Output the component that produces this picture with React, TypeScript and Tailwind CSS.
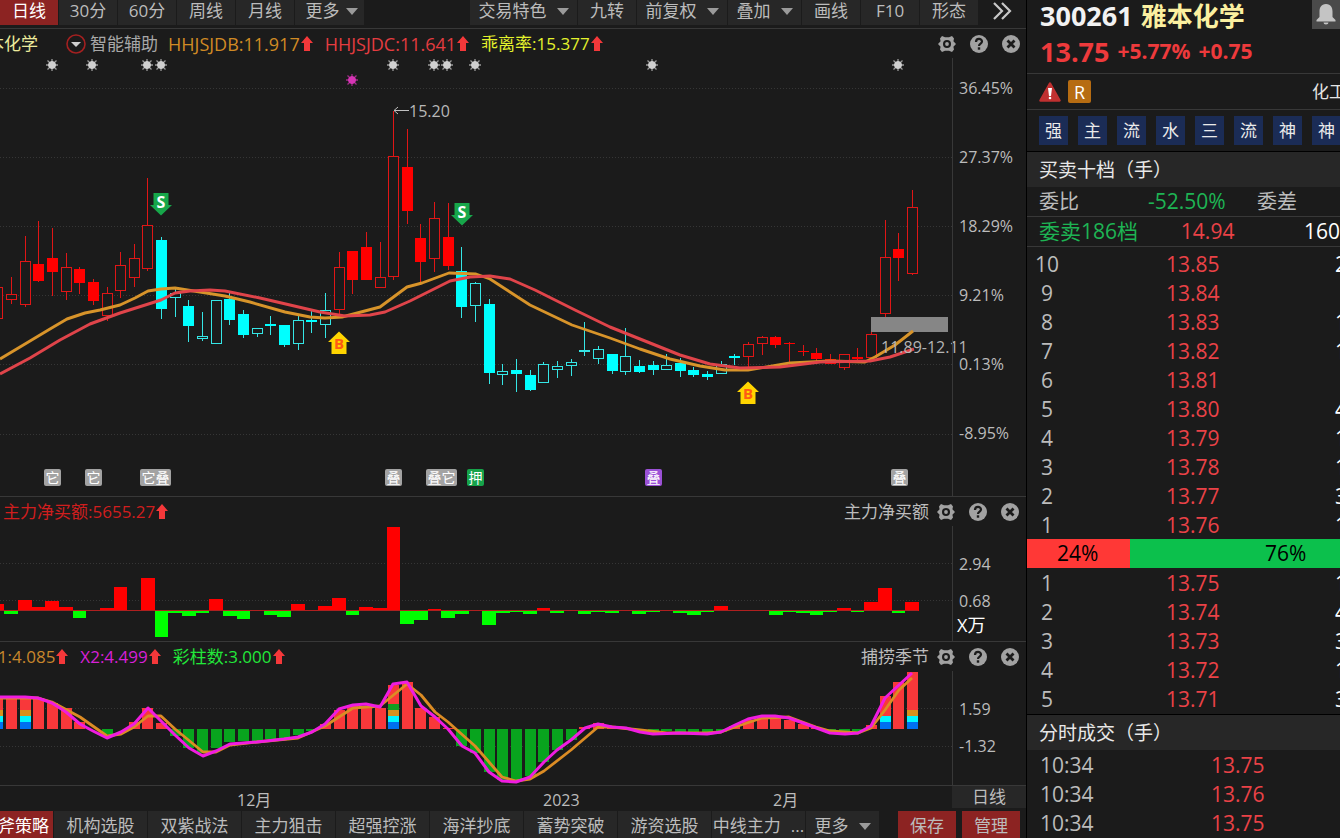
import type { ReactNode } from 'react';
import clsx from 'clsx';

type Kind = 'r' | 'R' | 'c' | 'C';
// kind, high, body top, body bottom, low. Upper case = filled body
type Candle = [Kind, number, number, number, number];

const STEP = 13.65;
const xOf = (i: number) => i * STEP - 2.2;

const candles: Candle[] = [
  ['r', 287, 287, 319, 319], ['r', 277, 294, 300, 304], ['r', 236, 261, 305, 307], ['R', 221, 264, 281, 282],
  ['R', 228, 258, 272, 296], ['r', 253, 267, 292, 300], ['R', 267, 269, 283, 294], ['R', 279, 282, 301, 305],
  ['r', 287, 293, 316, 321], ['r', 252, 265, 291, 298], ['r', 244, 258, 278, 287], ['r', 178, 225, 269, 271],
  ['C', 237, 240, 309, 319], ['c', 289, 293, 298, 317], ['C', 300, 306, 326, 342], ['c', 312, 336, 339, 341],
  ['c', 300, 300, 344, 344], ['C', 293, 299, 320, 325], ['C', 310, 314, 335, 338], ['c', 328, 328, 334, 337],
  ['C', 316, 324, 326, 335], ['C', 325, 325, 345, 347], ['c', 316, 320, 344, 350], ['C', 310, 320, 322, 333],
  ['c', 293, 310, 325, 338], ['r', 252, 267, 310, 317], ['R', 251, 251, 280, 294], ['R', 232, 247, 280, 280],
  ['r', 242, 277, 288, 288], ['r', 111, 156, 277, 280], ['R', 129, 167, 211, 224], ['R', 224, 238, 262, 284],
  ['r', 202, 218, 259, 272], ['R', 203, 237, 266, 270], ['C', 247, 271, 307, 318], ['c', 282, 283, 306, 322],
  ['C', 299, 304, 373, 384], ['c', 364, 371, 375, 385], ['C', 359, 370, 374, 392], ['C', 370, 375, 390, 391],
  ['c', 362, 364, 383, 383], ['c', 361, 366, 370, 378], ['c', 359, 362, 366, 376], ['c', 322, 350, 352, 356],
  ['c', 346, 349, 359, 364], ['C', 354, 354, 371, 374], ['c', 328, 356, 372, 375], ['C', 360, 366, 372, 373],
  ['C', 361, 365, 370, 375], ['c', 354, 365, 370, 370], ['C', 358, 363, 371, 377], ['C', 367, 370, 375, 377],
  ['C', 371, 374, 377, 380], ['c', 361, 364, 374, 374], ['C', 354, 356, 358, 365], ['r', 342, 344, 357, 367],
  ['r', 336, 337, 344, 355], ['R', 336, 337, 345, 348], ['R', 342, 343, 344, 362], ['R', 345, 351, 352, 356],
  ['R', 348, 353, 359, 364], ['R', 354, 359, 364, 364], ['r', 354, 354, 368, 370], ['R', 348, 357, 359, 362],
  ['r', 332, 334, 358, 358], ['r', 220, 257, 314, 317], ['R', 233, 249, 258, 281], ['r', 190, 207, 274, 275],
];

const maFast =
  '0,359 25,344 50,329 67,319 85,313 100,310 120,305 135,298 148,291 161,289 175,288 200,292 225,296 250,302 285,312 310,317 325,318 342,317 380,307 407,287 422,283 449,273 476,274 490,279 530,305 572,325 610,338 640,349 670,359 700,366 725,370 748,370 790,363 830,361 865,362 875,357 895,345 913,331';
const maSlow =
  '0,374 30,358 60,340 90,324 120,313 161,300 175,293 190,291 210,290 225,291 260,298 290,305 320,312 345,316 370,315 385,312 410,301 450,281 470,277 490,276 510,279 535,290 575,310 610,327 640,339 680,355 710,364 740,368 780,367 820,362 870,361 890,357 914,349';

const netBuy = [
  7, -3, 11, 4, 10, 4, -7, 1, 3, 24, 1, 33, -26, -2, -5, -2, 12, -5, -8, 1, -4, -6, 7, 1, 5, 13, -4, 4, 3, 84, -13,
  -9, 2, -7, -3, 1, -14, -2, -1, -3, 3, -2, 1, -3, -1, -2, 1, -3, -1, 1, -2, -4, -1, 5, 1, 1, 1, -4, -1, -2, -4, -1,
  3, -1, 9, 23, -2, 9,
];

const season = [
  32, 32, 32, 31, 26, 21, 7, 0, -5, 0, 7, 21, 6, -7, -19, -24, -19, -13, -12, -12, -10, -10, -6, -2, 5, 19, 23, 23,
  21, 44, 47, 21, 12, 1, -17, -24, -43, -51, -51, -47, -33, -21, -11, 2, 6, 2, 0, 0, -2, -2, -3, -3, -3, -3, 3, 9,
  11, 11, 9, 5, 1, -2, -4, -3, 4, 33, 47, 57,
];
const stripes: Record<number, number> = { 0: 3, 2: 3, 29: 4, 65: 2, 67: 3 };
const stripeColors = ['#0070f0', '#00f5ff', '#d8901c', '#109c20'];

const x2Line =
  '-2,697 25,697 38,698 52,703 66,712 80,724 93,731 107,738 121,732 134,724 148,708 161,721 175,735 189,748 203,756 216,751 230,744 257,742 284,739 298,737 312,732 325,724 339,709 353,705 366,704 380,707 393,684 407,682 421,706 435,717 448,729 462,746 475,753 489,772 502,781 516,782 530,777 544,762 557,750 571,740 585,728 598,724 612,727 626,728 640,732 653,734 680,733 707,734 721,732 735,725 748,719 762,716 775,716 789,718 803,723 830,733 845,734 858,733 871,726 885,698 899,685 912,673';
const x1Line =
  '0,698 38,698 52,702 80,717 107,736 121,734 134,727 148,716 161,716 175,729 203,752 216,752 230,745 257,742 298,738 325,726 353,708 380,706 407,684 421,695 435,712 448,722 475,746 489,762 502,777 516,781 530,779 544,771 571,750 598,727 612,727 640,730 667,733 707,733 721,732 735,727 762,718 789,717 816,727 830,731 858,733 871,728 885,710 899,690 912,678';

const stars = [52, 92, 147, 161, 393, 434, 447, 475, 652, 898];

const badges = [
  { x: 44, label: '它', color: '#a3a3a3' },
  { x: 85, label: '它', color: '#a3a3a3' },
  { x: 140, label: '它叠', color: '#a3a3a3' },
  { x: 385, label: '叠', color: '#a3a3a3' },
  { x: 426, label: '叠它', color: '#a3a3a3' },
  { x: 467, label: '押', color: '#16a34a' },
  { x: 645, label: '叠', color: '#9b51d6' },
  { x: 891, label: '叠', color: '#a3a3a3' },
];

const asks = [
  ['10', '13.85', '2'], ['9', '13.84', ''], ['8', '13.83', '1'], ['7', '13.82', '1'], ['6', '13.81', ''],
  ['5', '13.80', '4'], ['4', '13.79', '1'], ['3', '13.78', '1'], ['2', '13.77', '3'], ['1', '13.76', '1'],
];
const bids = [
  ['1', '13.75', '1'], ['2', '13.74', '4'], ['3', '13.73', '3'], ['4', '13.72', '1'], ['5', '13.71', '3'],
];
const trades = [['10:34', '13.75'], ['10:34', '13.76'], ['10:34', '13.75']];

const strategies = ['机构选股', '双紫战法', '主力狙击', '超强控涨', '海洋抄底', '蓄势突破', '游资选股'];

function Caret() {
  return (
    <svg width="12" height="7" viewBox="0 0 12 7" aria-hidden="true">
      <path d="M0 0h12L6 7z" fill="#9a9a9a" />
    </svg>
  );
}

function UpArrow() {
  return (
    <svg width="12" height="16" viewBox="0 0 12 16" className="ml-px" aria-hidden="true">
      <path d="M6 0l6 7H9v8H3V7H0z" fill="#f5383a" />
    </svg>
  );
}

function ToolButton({ children, className, caret }: { children: ReactNode; className: string; caret?: boolean }) {
  return (
    <button
      type="button"
      className={clsx('flex h-full items-center justify-center gap-[10px] text-[17px] whitespace-nowrap', className)}
    >
      {children}
      {caret && <Caret />}
    </button>
  );
}

function PanelTools() {
  return (
    <div className="flex gap-[14px]">
      <button type="button" aria-label="设置">
        <svg width="18" height="18" viewBox="0 0 18 18">
          <path
            d="M4 1l3 1.2h4L14 1l2 2.6-.6 2.6L18 9l-2.6 2.8.6 2.6L14 17l-3-1.2H7L4 17l-2-2.6.6-2.6L0 9l2.6-2.8L2 3.6z"
            fill="#a2a2a2"
          />
          <circle cx="9" cy="9" r="4" fill="#1b1b1b" />
          <circle cx="9" cy="9" r="1.900" fill="#a2a2a2" />
        </svg>
      </button>
      <button type="button" aria-label="帮助">
        <svg width="18" height="18" viewBox="0 0 18 18">
          <circle cx="9" cy="9" r="9" fill="#a2a2a2" />
          <path d="M6 7c0-4 6-4 6-.4C12 8.600 9 8.600 9 11" fill="none" stroke="#1b1b1b" strokeWidth="2.200" />
          <rect x="7.800" y="12.300" width="2.400" height="2.400" fill="#1b1b1b" />
        </svg>
      </button>
      <button type="button" aria-label="关闭">
        <svg width="18" height="18" viewBox="0 0 18 18">
          <circle cx="9" cy="9" r="9" fill="#a2a2a2" />
          <path d="M5.500 5.500l7 7m0-7l-7 7" stroke="#1b1b1b" strokeWidth="2.800" />
        </svg>
      </button>
    </div>
  );
}

function Indicator({ children, className }: { children: ReactNode; className: string }) {
  return (
    <span className={clsx('flex items-center whitespace-nowrap', className)}>
      {children}
      <UpArrow />
    </span>
  );
}

function Axis({ children, className }: { children: ReactNode; className: string }) {
  return (
    <div className={clsx('flex w-[74px] flex-none flex-col border-l border-[#383838] pl-[6px] text-base leading-6', className)}>
      {children}
    </div>
  );
}

function GridLines({ ys }: { ys: number[] }) {
  return (
    <>
      {ys.map((y) => (
        <line key={y} x1="0" x2="952" y1={y + 0.5} y2={y + 0.5} stroke="#363636" strokeDasharray="1 2" />
      ))}
    </>
  );
}

function Star({ x, y, color }: { x: number; y: number; color: string }) {
  return (
    <g transform={`translate(${x} ${y})`} stroke={color}>
      <circle r="3.500" fill={color} />
      <path d="M-6 0H6M0-6V6M-4.500-4.500l9 9M4.500-4.500l-9 9" strokeWidth="1.300" strokeOpacity="0.7" />
    </g>
  );
}

function CandleShape({ candle, x }: { candle: Candle; x: number }) {
  const [kind, high, top, bottom, low] = candle;
  const filled = kind === 'R' || kind === 'C';
  const red = kind === 'r' || kind === 'R';
  const cx = Math.floor(x) + 0.5;
  const line = red ? '#e01616' : '#35e6e6';
  const fill = red ? '#ff0000' : '#00ffff';
  return (
    <g>
      <path d={`M${cx} ${high}V${top}M${cx} ${bottom}V${low}`} stroke={line} />
      {filled ? (
        <rect x={cx - 5.500} y={top} width="11" height={bottom - top} fill={fill} />
      ) : (
        <rect x={cx - 5} y={top + 0.5} width="10" height={bottom - top - 1} fill="#1b1b1b" stroke={line} />
      )}
    </g>
  );
}

function Signal({ x, y, sell }: { x: number; y: number; sell?: boolean }) {
  return (
    <g transform={`translate(${x} ${y})`}>
      <path
        d={sell ? 'M-7.500-11h15V1H11L0 11.500-11 1h3.500z' : 'M0-11.500L11-1H7.500v12h-15V-1H-11z'}
        fill={sell ? '#17a74a' : '#ffd500'}
      />
      <text
        y={sell ? 4 : 6}
        textAnchor="middle"
        fontSize={sell ? 16 : 15}
        fontWeight="700"
        fill={sell ? '#fff' : '#ff5a14'}
      >
        {sell ? 'S' : 'B'}
      </text>
    </g>
  );
}

function PricePanel() {
  return (
    <section className="border-b border-[#383838]">
      <div className="flex h-[29px] items-center pr-[6px] text-[17px]">
        <span className="-ml-[13px] whitespace-nowrap text-[#ecea9c]">本化学</span>
        <button type="button" className="ml-7 flex items-center gap-1 whitespace-nowrap text-[#a8a8a8]">
          <svg width="20" height="20" viewBox="0 0 20 20" aria-hidden="true">
            <circle cx="10" cy="10" r="9" fill="none" stroke="#a32020" strokeWidth="1.600" />
            <path d="M5 8h10l-5 5z" fill="#d0d0d0" />
          </svg>
          智能辅助
        </button>
        <Indicator className="ml-[10px] text-lg text-[#d08a24]">HHJSJDB:11.917</Indicator>
        <Indicator className="ml-3 text-lg text-[#e43c40]">HHJSJDC:11.641</Indicator>
        <Indicator className="ml-3 text-[#e4f22c]">乖离率:15.377</Indicator>
        <div className="ml-auto">
          <PanelTools />
        </div>
      </div>
      <div className="flex h-[438px]">
        <svg viewBox="0 58 952 438" preserveAspectRatio="none" className="h-full min-w-0 flex-1 overflow-visible">
          <GridLines ys={[88, 157, 226, 295, 364, 434]} />
          {stars.map((x) => (
            <Star key={x} x={x} y={65} color="#d0d0d0" />
          ))}
          <Star x={352} y={80} color="#d634b4" />
          {candles.map((c, i) => (
            <CandleShape key={i} candle={c} x={xOf(i)} />
          ))}
          <rect x="871" y="317" width="77" height="15" fill="#868686" />
          <polyline points={maFast} fill="none" stroke="#d8942a" strokeWidth="2.900" strokeLinejoin="round" />
          <polyline points={maSlow} fill="none" stroke="#e0444a" strokeWidth="3" strokeLinejoin="round" />
          <text x="881" y="353" fontSize="16" fill="#b4b4b4">11.89-12.11</text>
          <path d="M394 110.500h15M398 107l-4 3.500 4 3.500" fill="none" stroke="#c0c0c0" />
          <text x="409" y="117" fontSize="16" fill="#b8b8b8">15.20</text>
          <Signal x={161} y={204} sell />
          <Signal x={462} y={214} sell />
          <Signal x={339} y={343} />
          <Signal x={748} y={393} />
          {badges.map((b) => (
            <g key={b.x}>
              <rect x={b.x} y="469" width={b.label.length * 14 + 3} height="17" rx="2" fill={b.color} />
              <text x={b.x + 1.500} y="483" fontSize="14" fill="#fff">{b.label}</text>
            </g>
          ))}
        </svg>
        <Axis className="gap-[45px] pt-[18px]">
          <span>36.45%</span>
          <span>27.37%</span>
          <span>18.29%</span>
          <span>9.21%</span>
          <span>0.13%</span>
          <span>-8.95%</span>
        </Axis>
      </div>
    </section>
  );
}

function NetBuyPanel() {
  return (
    <section className="border-b border-[#383838]">
      <div className="flex h-[29px] items-center justify-between pr-[7px] pl-[3px] text-[17px]">
        <Indicator className="text-[#d01e1e]">主力净买额:5655.27</Indicator>
        <div className="flex items-center gap-2">
          <h2>主力净买额</h2>
          <PanelTools />
        </div>
      </div>
      <div className="flex h-[115px]">
        <svg viewBox="0 526 952 115" preserveAspectRatio="none" className="h-full min-w-0 flex-1">
          <GridLines ys={[563, 600]} />
          {netBuy.map((v, i) => {
            const left = Math.round(xOf(i) - 7);
            const right = Math.round(xOf(i + 1) - 7);
            return (
              <rect
                key={i}
                x={left}
                y={v > 0 ? 611 - v : 611}
                width={right - left}
                height={Math.abs(v)}
                fill={v > 0 ? '#ff0000' : '#00ff00'}
              />
            );
          })}
          <line x1="0" x2="918" y1="610.500" y2="610.500" stroke="#b02020" />
        </svg>
        <Axis className="pt-[26px]">
          <span className="mb-[13px]">2.94</span>
          <span>0.68</span>
          <span className="-ml-[2px] text-lg leading-6 text-white">X万</span>
        </Axis>
      </div>
    </section>
  );
}

function SeasonPanel() {
  return (
    <section className="border-b border-[#383838]">
      <div className="flex h-[29px] items-center pr-[7px] text-[17px]">
        <Indicator className="-ml-3 text-[#c8862c]">X1:4.085</Indicator>
        <Indicator className="ml-3 text-[#d820d8]">X2:4.499</Indicator>
        <Indicator className="ml-3 text-[#22e83a]">彩柱数:3.000</Indicator>
        <div className="ml-auto flex items-center gap-2">
          <h2>捕捞季节</h2>
          <PanelTools />
        </div>
      </div>
      <div className="flex h-[114px]">
        <svg viewBox="0 671 952 114" preserveAspectRatio="none" className="h-full min-w-0 flex-1">
          <GridLines ys={[708, 746]} />
          {season.map((v, i) => {
            const left = Math.round(xOf(i) - 5.500);
            return (
              <g key={i}>
                <rect
                  x={left}
                  y={v > 0 ? 729 - v : 729}
                  width="11"
                  height={Math.abs(v)}
                  fill={v > 0 ? '#f8383a' : '#08a41e'}
                />
                {stripeColors.slice(0, stripes[i] ?? 0).map((color, n) => (
                  <rect key={color} x={left} y={722 - n * 6} width="11" height={n ? 6 : 7} fill={color} />
                ))}
              </g>
            );
          })}
          <polyline points={x1Line} fill="none" stroke="#dc8c24" strokeWidth="2.800" strokeLinejoin="round" />
          <polyline points={x2Line} fill="none" stroke="#f01ce0" strokeWidth="3" strokeLinejoin="round" />
        </svg>
        <Axis className="gap-[13px] pt-[26px]">
          <span>1.59</span>
          <span>-1.32</span>
        </Axis>
      </div>
    </section>
  );
}

function Toolbar() {
  const item = 'bg-[#272727]';
  return (
    <div className="flex h-[29px] justify-between border-b border-[#383838] pb-[3px]">
      <div className="flex gap-px pb-0 *:pb-[3px]">
        <ToolButton className="w-[58px] bg-[#8c2322] text-white">日线</ToolButton>
        <ToolButton className={clsx(item, 'w-[58px]')}>30分</ToolButton>
        <ToolButton className={clsx(item, 'w-[58px]')}>60分</ToolButton>
        <ToolButton className={clsx(item, 'w-[58px]')}>周线</ToolButton>
        <ToolButton className={clsx(item, 'w-[58px]')}>月线</ToolButton>
        <ToolButton caret className={clsx(item, 'w-[69px] gap-[6px]! pl-1')}>更多</ToolButton>
      </div>
      <div className="flex gap-px pr-[14px] *:pb-[3px]">
        <ToolButton caret className={clsx(item, 'w-[107px]')}>交易特色</ToolButton>
        <ToolButton className={clsx(item, 'w-[58px]')}>九转</ToolButton>
        <ToolButton caret className={clsx(item, 'w-[90px]')}>前复权</ToolButton>
        <ToolButton caret className={clsx(item, 'w-[73px]')}>叠加</ToolButton>
        <ToolButton className={clsx(item, 'w-[58px]')}>画线</ToolButton>
        <ToolButton className={clsx(item, 'w-[58px]')}>F10</ToolButton>
        <ToolButton className={clsx(item, 'w-[58px]')}>形态</ToolButton>
        <button type="button" aria-label="展开" className="ml-[13px]">
          <svg width="20" height="18" viewBox="0 0 20 18">
            <path d="M2 1l8 8-8 8M10 1l8 8-8 8" fill="none" stroke="#c8c8c8" strokeWidth="2.200" />
          </svg>
        </button>
      </div>
    </div>
  );
}

function StrategyBar() {
  return (
    <div className="flex h-[30px] flex-none justify-between pr-[6px]">
      <div className="flex gap-px">
        <ToolButton className="w-[53px] justify-end! bg-[#8c2322] pr-1 text-white">斧策略</ToolButton>
        {strategies.map((s) => (
          <ToolButton key={s} className="w-[93px] bg-[#272727]">
            {s}
          </ToolButton>
        ))}
        <ToolButton className="w-[93px] bg-[#272727]">
          <span>中线主力</span>
          <span>...</span>
        </ToolButton>
        <ToolButton caret className="w-[73px] bg-[#272727]">更多</ToolButton>
      </div>
      <div className="flex gap-[6px]">
        <ToolButton className="w-[58px] bg-[#8c2322]">保存</ToolButton>
        <ToolButton className="w-[58px] bg-[#8c2322]">管理</ToolButton>
      </div>
    </div>
  );
}

function OrderTable({ rows }: { rows: string[][] }) {
  return (
    <table className="w-full table-fixed text-[21px] leading-7">
      <colgroup>
        <col className="w-[40px]" />
        <col />
        <col className="w-[5px]" />
      </colgroup>
      <tbody>
        {rows.map(([level, price, volume]) => (
          <tr key={level} className="h-[29px]">
            <td className="text-center">{level}</td>
            <td className="pl-[99px] text-[#ea4247]">{price}</td>
            <td className="text-white">{volume}</td>
          </tr>
        ))}
      </tbody>
    </table>
  );
}

function QuotePanel() {
  return (
    <aside className="overflow-hidden border-l border-black whitespace-nowrap">
      <header className="h-[74px] border-b border-[#383838] pl-[13px] font-bold">
        <div className="flex h-8 items-start justify-between">
          <h1 className="flex gap-2 leading-8">
            <span className="text-[27px] text-[#f2f2f2]">300261</span>
            <span className="text-[26px] text-[#fbf0a0]">雅本化学</span>
          </h1>
          <button type="button" aria-label="提醒" className="flex h-[29px] w-7 justify-center bg-[#4a4a4a] pt-1">
            <svg width="20" height="21" viewBox="0 0 20 21">
              <path d="M10 0c5 0 6.500 4 6.500 7.500V13l3 3v1.500H.5V16l3-3V7.500C3.500 4 5 0 10 0zM7.500 18.500h5a2.500 2 0 0 1-5 0z" fill="#c4c4c4" />
            </svg>
          </button>
        </div>
        <div className="flex h-10 items-center gap-2 text-[#ee3a3c]">
          <span className="text-[27px]">13.75</span>
          <span className="text-[21px]">+5.77%</span>
          <span className="text-[21px]">+0.75</span>
        </div>
      </header>

      <div className="flex h-9 items-center gap-[7px] border-b border-[#383838] pl-3">
        <svg width="22" height="20" viewBox="0 0 22 20" aria-hidden="true">
          <path d="M11 1.500L20.500 18.500h-19z" fill="#c03030" stroke="#c03030" strokeWidth="2.500" strokeLinejoin="round" />
          <path d="M9 6h4l-1 8h-2z" fill="#fff" />
          <circle cx="11" cy="16" r="1.300" fill="#fff" />
        </svg>
        <span className="flex size-[23px] items-center justify-center rounded-xs bg-[#b66c12] text-lg text-white">R</span>
        <a href="#industry" className="ml-auto w-7 text-[17px] text-[#e4e4e4]">化工</a>
      </div>

      <div className="flex h-[41px] items-center gap-[10px] pl-3">
        {['强', '主', '流', '水', '三', '流', '神', '神'].map((tag, i) => (
          <button key={i} type="button" className="size-[29px] flex-none bg-[#1b2c56] text-[17px] text-[#eaeaea]">
            {tag}
          </button>
        ))}
      </div>

      <h2 className="h-9 border-t border-black bg-[#272727] pl-3 text-[19px] leading-9 text-[#e8e8e8]">买卖十档（手）</h2>
      <div className="flex h-[30px] items-center border-b border-[#383838] pl-3">
        <span className="w-[109px] text-xl">委比</span>
        <span className="w-[109px] text-[21px] text-[#1eb454]">-52.50%</span>
        <span className="text-xl">委差</span>
      </div>
      <div className="flex h-[30px] items-center border-b border-[#383838] pl-3 text-[21px]">
        <span className="w-[144px] text-[#1eb454]">委卖186档</span>
        <span className="w-[125px] text-[#ea4247]">14.94</span>
        <span className="text-white">160</span>
      </div>

      <div className="pt-[2px]">
        <OrderTable rows={asks} />
      </div>
      <div className="flex h-[29px] items-center text-[21px] text-black">
        <span className="h-full w-[103px] bg-[#ff3836] pl-[30px] leading-[29px]">24%</span>
        <span className="h-full flex-1 bg-[#0cc04c] pl-[135px] leading-[29px]">76%</span>
      </div>
      <OrderTable rows={bids} />

      <h2 className="mt-px h-9 border-t border-black bg-[#272727] pl-3 text-[19px] leading-9 text-[#e8e8e8]">分时成交（手）</h2>
      <table className="w-full table-fixed text-[21px] leading-7">
        <tbody>
          {trades.map(([time, price], i) => (
            <tr key={i} className="h-[29px]">
              <td className="w-[184px] pl-[13px]">{time}</td>
              <td className="text-[#ea4247]">{price}</td>
            </tr>
          ))}
        </tbody>
      </table>
    </aside>
  );
}

export default function App() {
  return (
    <div className="grid h-screen grid-cols-[minmax(0,1fr)_314px] overflow-hidden bg-[#1b1b1b] font-['Open_Sans','Noto_Sans_CJK_SC',sans-serif] text-[#bcbcbc]">
      <main className="flex flex-col overflow-hidden">
        <Toolbar />
        <PricePanel />
        <NetBuyPanel />
        <SeasonPanel />
        <div className="flex h-[25px] flex-none text-base">
          <div className="grid flex-1 grid-cols-[237fr_306fr_230fr_179fr] items-center pt-[2px]">
            <span className="col-start-2">12月</span>
            <span>2023</span>
            <span>2月</span>
          </div>
          <span className="mb-[3px] flex w-[74px] items-center justify-center bg-[#272727] text-[17px]">日线</span>
        </div>
        <StrategyBar />
      </main>
      <QuotePanel />
    </div>
  );
}
